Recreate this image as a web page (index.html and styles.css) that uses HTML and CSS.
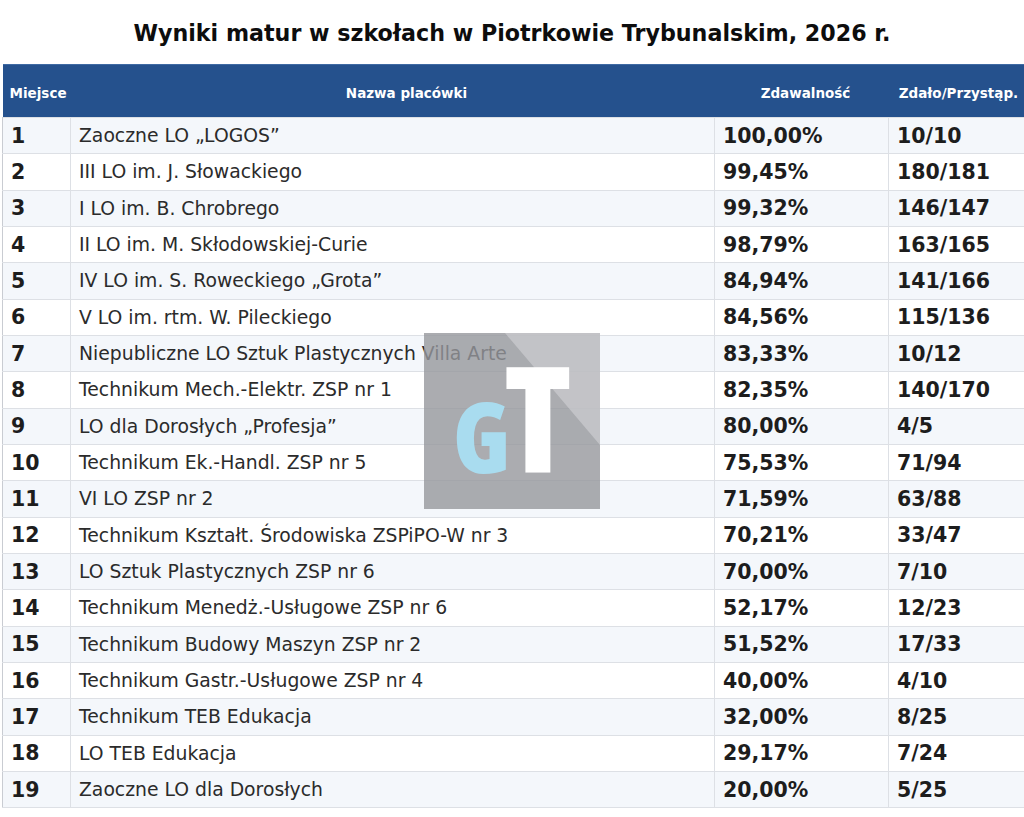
FILE: index.html
```html
<!DOCTYPE html>
<html lang="pl">
<head>
<meta charset="utf-8">
<title>Wyniki matur</title>
<link rel="stylesheet" href="styles.css">
</head>
<body>
<h1 class="title">Wyniki matur w szkołach w Piotrkowie Trybunalskim, 2026 r.</h1>
<div class="wrap">
<table class="results">
<colgroup>
<col class="c-place"><col class="c-name"><col class="c-pct"><col class="c-cnt">
</colgroup>
<thead>
<tr><th class="h-place">Miejsce</th><th class="h-name">Nazwa placówki</th><th class="h-pct">Zdawalność</th><th class="h-cnt">Zdało/Przystąp.</th></tr>
</thead>
<tbody>
<tr><td class="num">1</td><td class="name">Zaoczne LO „LOGOS”</td><td class="num">100,00%</td><td class="num">10/10</td></tr>
<tr><td class="num">2</td><td class="name">III LO im. J. Słowackiego</td><td class="num">99,45%</td><td class="num">180/181</td></tr>
<tr><td class="num">3</td><td class="name">I LO im. B. Chrobrego</td><td class="num">99,32%</td><td class="num">146/147</td></tr>
<tr><td class="num">4</td><td class="name">II LO im. M. Skłodowskiej-Curie</td><td class="num">98,79%</td><td class="num">163/165</td></tr>
<tr><td class="num">5</td><td class="name">IV LO im. S. Roweckiego „Grota”</td><td class="num">84,94%</td><td class="num">141/166</td></tr>
<tr><td class="num">6</td><td class="name">V LO im. rtm. W. Pileckiego</td><td class="num">84,56%</td><td class="num">115/136</td></tr>
<tr><td class="num">7</td><td class="name">Niepubliczne LO Sztuk Plastycznych Villa Arte</td><td class="num">83,33%</td><td class="num">10/12</td></tr>
<tr><td class="num">8</td><td class="name">Technikum Mech.-Elektr. ZSP nr 1</td><td class="num">82,35%</td><td class="num">140/170</td></tr>
<tr><td class="num">9</td><td class="name">LO dla Dorosłych „Profesja”</td><td class="num">80,00%</td><td class="num">4/5</td></tr>
<tr><td class="num">10</td><td class="name">Technikum Ek.-Handl. ZSP nr 5</td><td class="num">75,53%</td><td class="num">71/94</td></tr>
<tr><td class="num">11</td><td class="name">VI LO ZSP nr 2</td><td class="num">71,59%</td><td class="num">63/88</td></tr>
<tr><td class="num">12</td><td class="name">Technikum Kształt. Środowiska ZSPiPO-W nr 3</td><td class="num">70,21%</td><td class="num">33/47</td></tr>
<tr><td class="num">13</td><td class="name">LO Sztuk Plastycznych ZSP nr 6</td><td class="num">70,00%</td><td class="num">7/10</td></tr>
<tr><td class="num">14</td><td class="name">Technikum Menedż.-Usługowe ZSP nr 6</td><td class="num">52,17%</td><td class="num">12/23</td></tr>
<tr><td class="num">15</td><td class="name">Technikum Budowy Maszyn ZSP nr 2</td><td class="num">51,52%</td><td class="num">17/33</td></tr>
<tr><td class="num">16</td><td class="name">Technikum Gastr.-Usługowe ZSP nr 4</td><td class="num">40,00%</td><td class="num">4/10</td></tr>
<tr><td class="num">17</td><td class="name">Technikum TEB Edukacja</td><td class="num">32,00%</td><td class="num">8/25</td></tr>
<tr><td class="num">18</td><td class="name">LO TEB Edukacja</td><td class="num">29,17%</td><td class="num">7/24</td></tr>
<tr><td class="num">19</td><td class="name">Zaoczne LO dla Dorosłych</td><td class="num">20,00%</td><td class="num">5/25</td></tr>
</tbody>
</table>
<div class="watermark" aria-hidden="true">
<svg width="176" height="176" viewBox="0 0 176 176">
<rect x="0" y="0" width="176" height="176" fill="rgb(150,151,156)" fill-opacity="0.8"/>
<polygon points="81,0 176,0 176,112" fill="rgb(215,215,218)" fill-opacity="0.55"/>
<text x="29" y="140" class="wm-g">G</text>
<text x="80" y="140" class="wm-t">T</text>
</svg>
</div>
</div>
</body>
</html>
```
FILE: styles.css
```css
html, body {
  margin: 0;
  padding: 0;
  background: #ffffff;
}
body {
  font-family: "DejaVu Sans", "Liberation Sans", sans-serif;
  color: #222;
}
.title {
  margin: 0;
  padding-top: 20px;
  height: 64px;
  box-sizing: border-box;
  font-size: 22.2px;
  line-height: 26px;
  font-weight: bold;
  text-align: center;
  color: #0d0d0d;
}
.wrap {
  position: relative;
  padding-left: 2px;
}
.results {
  width: 1022px;
  table-layout: fixed;
  border-collapse: collapse;
}
.c-place { width: 68px; }
.c-name { width: 644px; }
.c-pct { width: 174px; }
.c-cnt { width: 136px; }
.results thead tr {
  height: 53px;
  background: #25518d;
}
.results th {
  color: #ffffff;
  font-size: 13.5px;
  font-weight: bold;
  padding: 4px 0 0 0;
  border-top: 1px solid #3f6aa3;
}
.h-place { text-align: left; padding-left: 7px !important; }
.h-name { text-align: center; padding-left: 28px !important; }
.h-pct { text-align: center; padding-left: 8px !important; }
.h-cnt { text-align: center; padding-left: 4px !important; }
.results tbody tr {
  height: 36.33px;
}
.results tbody tr:nth-child(odd) { background: #f4f7fb; }
.results tbody tr:nth-child(even) { background: #ffffff; }
.results td {
  padding: 0 8px;
  border: 1px solid #dde0e5;
  white-space: nowrap;
  overflow: hidden;
}
.results td:first-child { border-left: 1px solid #c9ccd2; }
.results td:last-child { border-right: none; }
.num {
  font-weight: bold;
  font-size: 20.5px;
  color: #1d1d1d;
}
.name {
  font-size: 18.8px;
  color: #2b2b2b;
}
.watermark {
  position: absolute;
  left: 424px;
  top: 269px;
  width: 176px;
  height: 176px;
}
.watermark svg { display: block; }
.wm-g {
  font-family: "Open Sans", sans-serif;
  font-weight: 800;
  font-stretch: 75%;
  font-size: 97px;
  fill: #a9dcef;
}
.wm-t {
  font-family: "Open Sans", sans-serif;
  font-weight: 800;
  font-stretch: 75%;
  font-size: 147px;
  fill: #ffffff;
}
```
